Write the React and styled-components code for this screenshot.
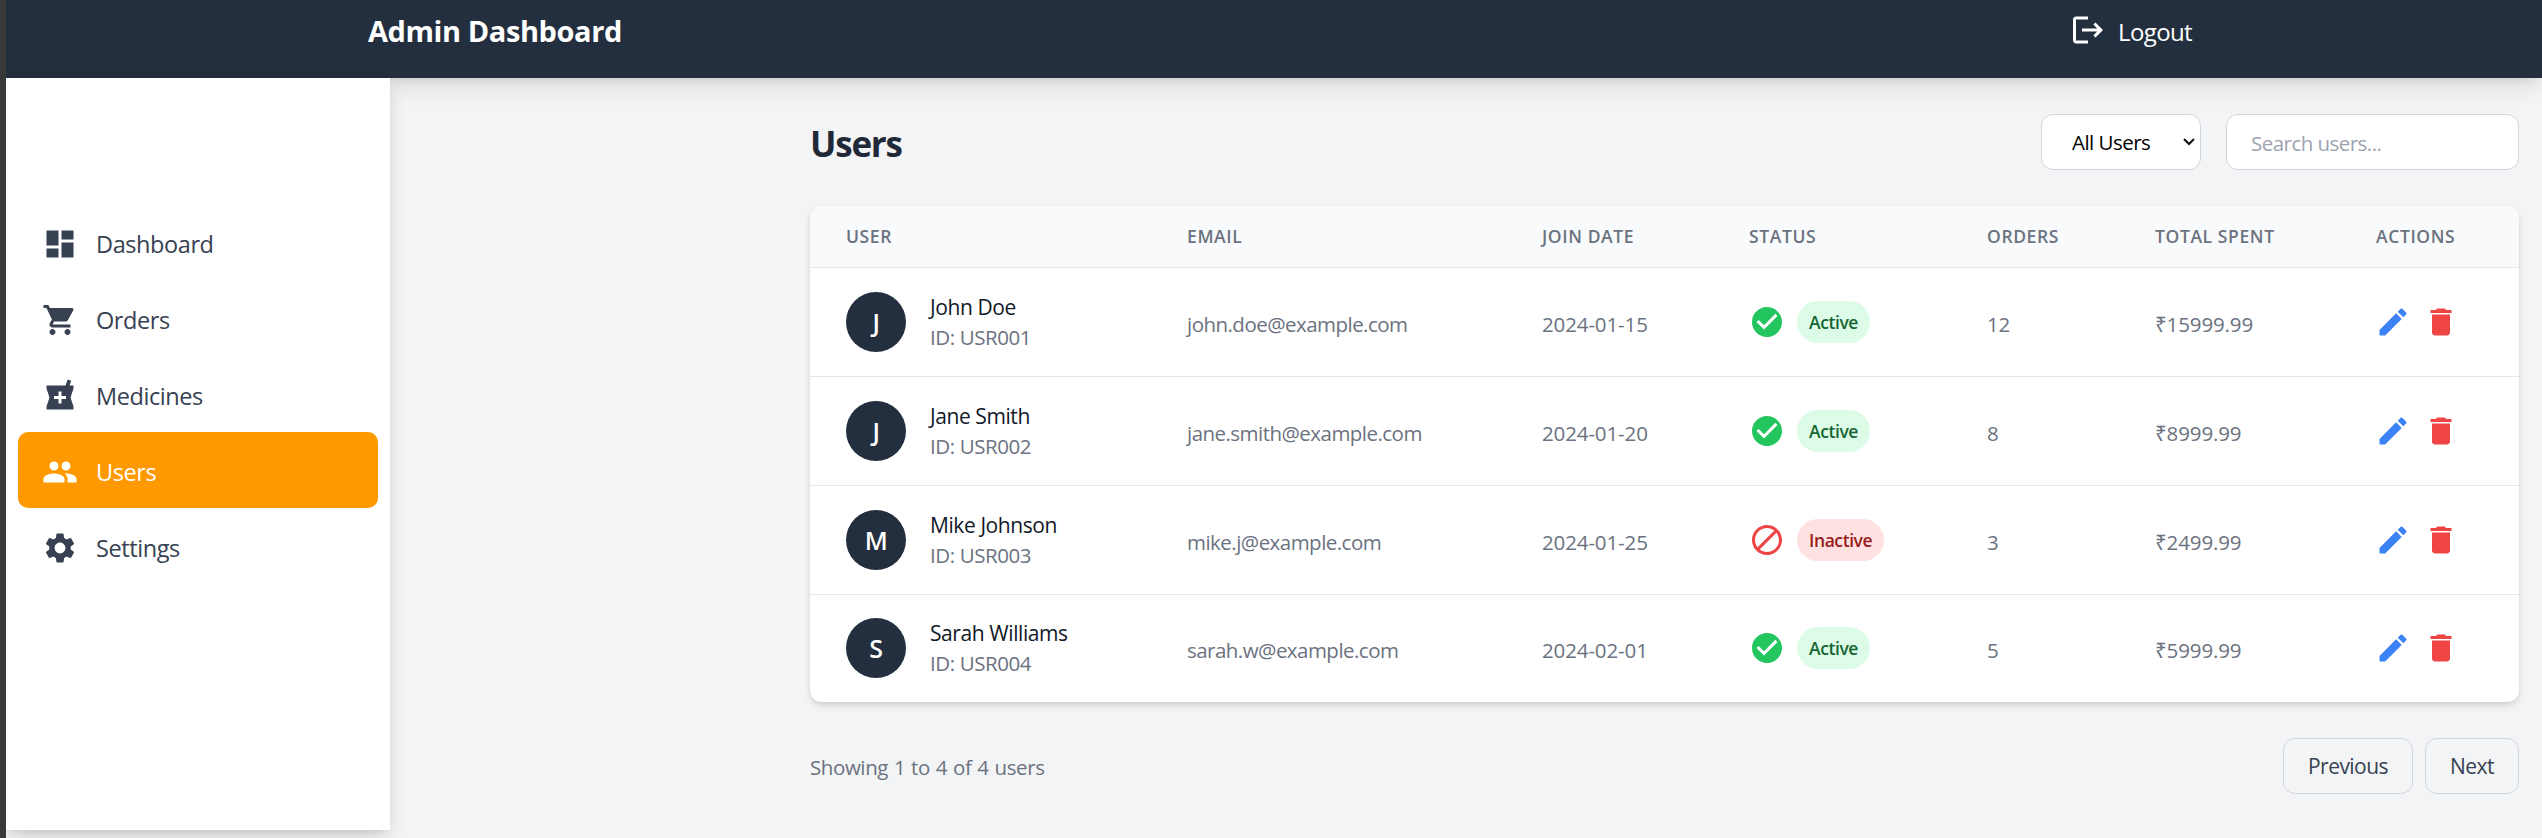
import React from 'react';
import styled, { createGlobalStyle } from 'styled-components';
import {
  MdDashboard,
  MdShoppingCart,
  MdLocalPharmacy,
  MdPeople,
  MdSettings,
  MdLogout,
  MdCheckCircle,
  MdBlock,
  MdEdit,
  MdDelete,
} from 'react-icons/md';

const chevron =
  "data:image/svg+xml,%3Csvg xmlns='http://www.w3.org/2000/svg' width='12' height='8'%3E%3Cpath d='M1 1l5 5 5-5' fill='none' stroke='%23111' stroke-width='2'/%3E%3C/svg%3E";

const GlobalStyle = createGlobalStyle`
  html, body {
    margin: 0;
    height: 100%;
    background: #393939;
  }
  body {
    font-family: "Open Sans", "Noto Sans", sans-serif;
    letter-spacing: -0.026em;
    overflow: hidden;
  }
  * {
    box-sizing: border-box;
  }
`;

const Page = styled.div`
  display: flex;
  flex-direction: column;
  height: 838px;
  margin-left: 6px;
  background: #f3f4f6;
  overflow: hidden;
`;

const TopBar = styled.header`
  position: relative;
  z-index: 2;
  flex: none;
  display: flex;
  justify-content: space-between;
  height: 78px;
  padding: 10px 350px 0 362px;
  background: #232f3e;
  color: #fff;
  box-shadow: 0 10px 22px -3px rgba(0, 0, 0, 0.12), 0 4px 9px -4px rgba(0, 0, 0, 0.1);
`;

const Brand = styled.h1`
  margin: 0;
  font-size: 29px;
  font-weight: 700;
  line-height: 42px;
`;

const LogoutButton = styled.button`
  display: flex;
  align-items: center;
  gap: 12px;
  height: 39px;
  padding: 0;
  border: 0;
  background: none;
  color: #fff;
  font: inherit;
  font-size: 24px;
  letter-spacing: -0.026em;
`;

const LogoutLabel = styled.span`
  padding-top: 3px;
`;

const Body = styled.div`
  flex: 1;
  display: flex;
  align-items: flex-start;
`;

const Sidebar = styled.aside`
  position: relative;
  z-index: 3;
  flex: none;
  width: 384px;
  height: 752px;
  padding: 126px 12px 0;
  background: #fff;
  box-shadow: 0 10px 22px -3px rgba(0, 0, 0, 0.14), 0 4px 9px -4px rgba(0, 0, 0, 0.12);
`;

const NavItem = styled.a`
  display: flex;
  align-items: center;
  gap: 18px;
  height: 76px;
  padding: 3px 0 0 24px;
  border-radius: 10px;
  font-size: 23.5px;
  color: ${props => (props.$active ? '#fff' : '#374151')};
  background: ${props => (props.$active ? '#ff9900' : 'transparent')};
`;

const Main = styled.main`
  flex: 1;
  min-width: 0;
  padding: 36px 23px 0 420px;
`;

const Toolbar = styled.div`
  display: flex;
  align-items: center;
  justify-content: space-between;
  height: 56px;
  margin-bottom: 36px;
`;

const Title = styled.h2`
  margin: 0;
  padding-top: 3px;
  font-size: 35px;
  font-weight: 700;
  letter-spacing: -0.035em;
  color: #1f2937;
`;

const Filters = styled.div`
  display: flex;
  gap: 25px;
`;

const FilterSelect = styled.select`
  appearance: none;
  width: 160px;
  height: 56px;
  padding: 0 12px 0 30px;
  border: 1.5px solid #d1d5db;
  border-radius: 12px;
  background: #fff url("${chevron}") no-repeat 141px center;
  color: #000;
  font: inherit;
  font-size: 20.5px;
  letter-spacing: -0.026em;
`;

const SearchInput = styled.input`
  width: 293px;
  height: 56px;
  padding: 2px 24px 0;
  border: 1.5px solid #d1d5db;
  border-radius: 12px;
  background: #fff;
  font: inherit;
  font-size: 20.5px;
  letter-spacing: -0.026em;
  &::placeholder {
    color: #9ca3af;
    opacity: 1;
  }
`;

const Card = styled.div`
  border-radius: 12px;
  background: #fff;
  overflow: hidden;
  box-shadow: 0 4px 9px -1px rgba(0, 0, 0, 0.12), 0 2px 6px -2px rgba(0, 0, 0, 0.1);
`;

const Table = styled.table`
  width: 100%;
  border-collapse: collapse;
  table-layout: fixed;
`;

const Head = styled.th`
  width: ${props => props.$w}px;
  height: 61px;
  padding: 0 0 0 36px;
  border-bottom: 1px solid #e5e7eb;
  background: #f9fafb;
  color: #6b7280;
  font-size: 17.5px;
  font-weight: 600;
  letter-spacing: 0.035em;
  text-align: left;
  text-transform: uppercase;
`;

const Row = styled.tr`
  height: 109px;
  border-bottom: 1px solid #e5e7eb;
  &:last-child {
    height: 108px;
    border-bottom: 0;
  }
`;

const Cell = styled.td`
  padding: 4px 0 0 36px;
  color: #6b7280;
  font-size: 20.5px;
  letter-spacing: ${props => (props.$numeric ? '-0.006em' : '-0.026em')};
`;

const FlexCell = styled.td`
  padding: 0 0 0 36px;
`;

const UserBox = styled.div`
  display: flex;
  align-items: center;
  gap: 24px;
`;

const Avatar = styled.div`
  display: flex;
  align-items: center;
  justify-content: center;
  width: 60px;
  height: 60px;
  border-radius: 50%;
  background: #232f3e;
  color: #fff;
  font-size: 25px;
  font-weight: 600;
`;

const UserName = styled.div`
  font-size: 21px;
  font-weight: 500;
  line-height: 30px;
  color: #111827;
`;

const UserId = styled.div`
  font-size: 20.5px;
  line-height: 30px;
  color: #6b7280;
`;

const StatusBox = styled.div`
  display: flex;
  align-items: center;
  gap: 12px;
  color: ${props => (props.$active ? '#22c55e' : '#ef4444')};
`;

const Pill = styled.span`
  display: inline-flex;
  align-items: center;
  height: 42px;
  padding: 0 12px;
  border-radius: 21px;
  font-size: 17.5px;
  font-weight: 600;
  color: ${props => (props.$active ? '#166534' : '#991b1b')};
  background: ${props => (props.$active ? '#dcfce7' : '#fee2e2')};
`;

const ActionBox = styled.div`
  display: flex;
  align-items: center;
  gap: 12px;
  margin-left: -1px;
`;

const ActionIcon = styled.span`
  display: flex;
  color: ${props => (props.$danger ? '#ef4444' : '#3b82f6')};
`;

const Footer = styled.div`
  display: flex;
  align-items: center;
  justify-content: space-between;
  margin-top: 36px;
`;

const Summary = styled.span`
  padding-top: 2px;
  font-size: 20.5px;
  word-spacing: 1px;
  color: #6b7280;
`;

const Pager = styled.div`
  display: flex;
  gap: 12px;
`;

const PageButton = styled.button`
  height: 56px;
  width: ${props => props.$w}px;
  border: 1.5px solid #d1d5db;
  border-radius: 12px;
  background: transparent;
  color: #374151;
  font: inherit;
  font-size: 21px;
  font-weight: 500;
  letter-spacing: -0.026em;
`;

const navItems = [
  { label: 'Dashboard', Icon: MdDashboard },
  { label: 'Orders', Icon: MdShoppingCart },
  { label: 'Medicines', Icon: MdLocalPharmacy },
  { label: 'Users', Icon: MdPeople, active: true },
  { label: 'Settings', Icon: MdSettings },
];

const columns = [
  ['User', 341],
  ['Email', 355],
  ['Join Date', 207],
  ['Status', 238],
  ['Orders', 168],
  ['Total Spent', 221],
  ['Actions', 179],
];

const users = [
  { name: 'John Doe', id: 'USR001', email: 'john.doe@example.com', date: '2024-01-15', active: true, orders: 12, spent: '₹15999.99' },
  { name: 'Jane Smith', id: 'USR002', email: 'jane.smith@example.com', date: '2024-01-20', active: true, orders: 8, spent: '₹8999.99' },
  { name: 'Mike Johnson', id: 'USR003', email: 'mike.j@example.com', date: '2024-01-25', active: false, orders: 3, spent: '₹2499.99' },
  { name: 'Sarah Williams', id: 'USR004', email: 'sarah.w@example.com', date: '2024-02-01', active: true, orders: 5, spent: '₹5999.99' },
];

const App = () => (
  <Page>
    <GlobalStyle />
    <TopBar>
      <Brand>Admin Dashboard</Brand>
      <LogoutButton type="button">
        <MdLogout size={36} />
        <LogoutLabel>Logout</LogoutLabel>
      </LogoutButton>
    </TopBar>
    <Body>
      <Sidebar>
        <nav>
          {navItems.map(({ label, Icon, active }) => (
            <NavItem key={label} $active={active}>
              <Icon size={36} />
              {label}
            </NavItem>
          ))}
        </nav>
      </Sidebar>
      <Main>
        <Toolbar>
          <Title>Users</Title>
          <Filters>
            <FilterSelect defaultValue="all">
              <option value="all">All Users</option>
              <option value="active">Active</option>
              <option value="inactive">Inactive</option>
            </FilterSelect>
            <SearchInput placeholder="Search users..." />
          </Filters>
        </Toolbar>
        <Card>
          <Table>
            <thead>
              <tr>
                {columns.map(([label, width]) => (
                  <Head key={label} $w={width}>{label}</Head>
                ))}
              </tr>
            </thead>
            <tbody>
              {users.map(user => (
                <Row key={user.id}>
                  <FlexCell>
                    <UserBox>
                      <Avatar>{user.name[0]}</Avatar>
                      <div>
                        <UserName>{user.name}</UserName>
                        <UserId>ID: {user.id}</UserId>
                      </div>
                    </UserBox>
                  </FlexCell>
                  <Cell>{user.email}</Cell>
                  <Cell $numeric>{user.date}</Cell>
                  <FlexCell>
                    <StatusBox $active={user.active}>
                      {user.active ? <MdCheckCircle size={36} /> : <MdBlock size={36} />}
                      <Pill $active={user.active}>{user.active ? 'Active' : 'Inactive'}</Pill>
                    </StatusBox>
                  </FlexCell>
                  <Cell $numeric>{user.orders}</Cell>
                  <Cell $numeric>{user.spent}</Cell>
                  <FlexCell>
                    <ActionBox>
                      <ActionIcon><MdEdit size={36} /></ActionIcon>
                      <ActionIcon $danger><MdDelete size={36} /></ActionIcon>
                    </ActionBox>
                  </FlexCell>
                </Row>
              ))}
            </tbody>
          </Table>
        </Card>
        <Footer>
          <Summary>Showing 1 to 4 of 4 users</Summary>
          <Pager>
            <PageButton type="button" $w={130}>Previous</PageButton>
            <PageButton type="button" $w={94}>Next</PageButton>
          </Pager>
        </Footer>
      </Main>
    </Body>
  </Page>
);

export default App;
